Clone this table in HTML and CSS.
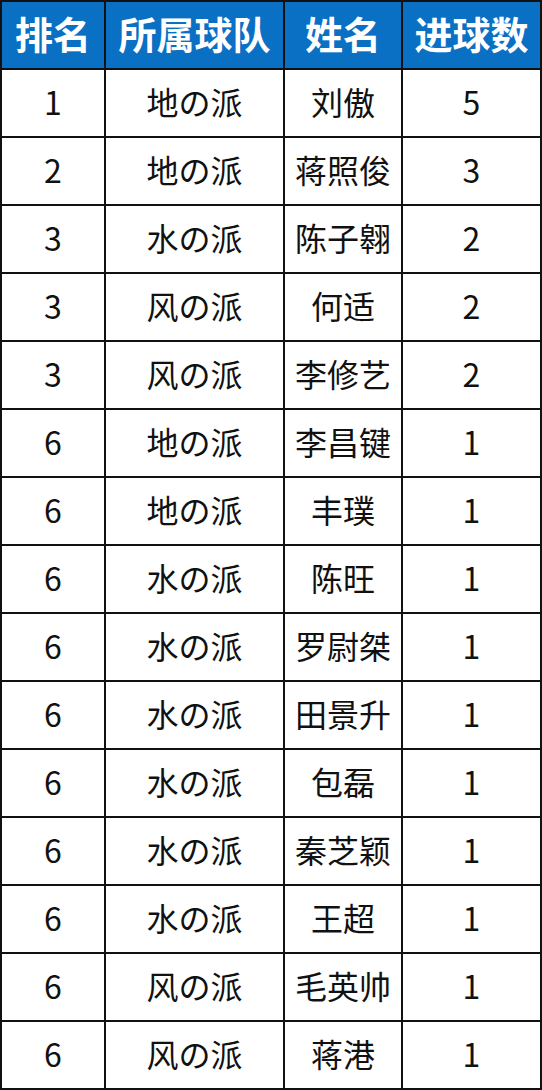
FILE: index.html
```html
<!DOCTYPE html>
<html lang="zh">
<head>
<meta charset="utf-8">
<link rel="stylesheet" href="styles.css">
</head>
<body>
<table class="rank">
<colgroup><col class="c1"><col class="c2"><col class="c3"><col class="c4"></colgroup>
<thead>
<tr><th>排名</th><th>所属球队</th><th>姓名</th><th>进球数</th></tr>
</thead>
<tbody>
<tr><td>1</td><td>地の派</td><td>刘傲</td><td>5</td></tr>
<tr><td>2</td><td>地の派</td><td>蒋照俊</td><td>3</td></tr>
<tr><td>3</td><td>水の派</td><td>陈子翱</td><td>2</td></tr>
<tr><td>3</td><td>风の派</td><td>何适</td><td>2</td></tr>
<tr><td>3</td><td>风の派</td><td>李修艺</td><td>2</td></tr>
<tr><td>6</td><td>地の派</td><td>李昌键</td><td>1</td></tr>
<tr><td>6</td><td>地の派</td><td>丰璞</td><td>1</td></tr>
<tr><td>6</td><td>水の派</td><td>陈旺</td><td>1</td></tr>
<tr><td>6</td><td>水の派</td><td>罗尉桀</td><td>1</td></tr>
<tr><td>6</td><td>水の派</td><td>田景升</td><td>1</td></tr>
<tr><td>6</td><td>水の派</td><td>包磊</td><td>1</td></tr>
<tr><td>6</td><td>水の派</td><td>秦芝颖</td><td>1</td></tr>
<tr><td>6</td><td>水の派</td><td>王超</td><td>1</td></tr>
<tr><td>6</td><td>风の派</td><td>毛英帅</td><td>1</td></tr>
<tr><td>6</td><td>风の派</td><td>蒋港</td><td>1</td></tr>
</tbody>
</table>
</body>
</html>
```

FILE: styles.css
```css
html, body {
  margin: 0;
  padding: 0;
  background: #ffffff;
}
.rank {
  width: 542px;
  border-collapse: separate;
  border-spacing: 2px;
  background: #111111;
  table-layout: fixed;
  font-family: "Noto Sans CJK SC", "Noto Sans", sans-serif;
}
.c1 { width: 102px; }
.c2 { width: 177px; }
.c3 { width: 116px; }
.c4 { width: 137px; }
.rank th,
.rank td {
  height: 66px;
  padding: 0 0 4px 0;
  text-align: center;
  vertical-align: middle;
  box-sizing: border-box;
  line-height: 1;
}
.rank th {
  background: #0a70c4;
  color: #ffffff;
  font-size: 38px;
  font-weight: 700;
}
.rank td {
  background: #ffffff;
  color: #111111;
  font-size: 32px;
  font-weight: 400;
}
```
